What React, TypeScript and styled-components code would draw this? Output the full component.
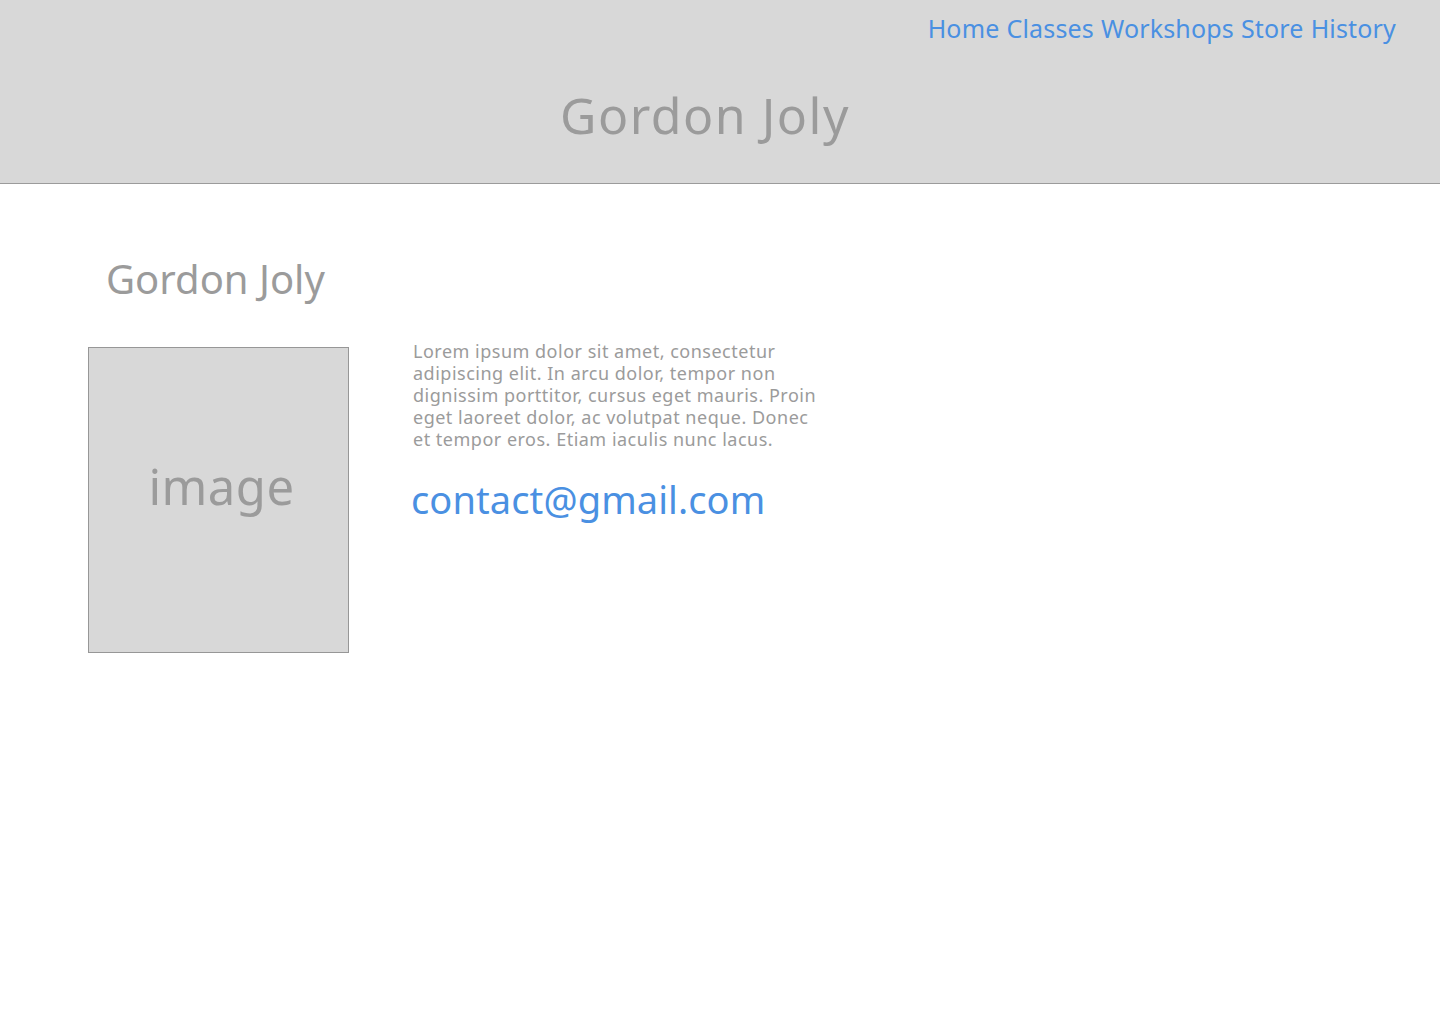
import React from 'react';
import styled, { createGlobalStyle } from 'styled-components';

const GlobalStyle = createGlobalStyle`
  body {
    margin: 0;
    background: #ffffff;
    font-family: 'Noto Sans', 'Open Sans', sans-serif;
  }
`;

const links = ['Home', 'Classes', 'Workshops', 'Store', 'History'];

const bioLines = [
  'Lorem ipsum dolor sit amet, consectetur',
  'adipiscing elit. In arcu dolor, tempor non',
  'dignissim porttitor, cursus eget mauris. Proin',
  'eget laoreet dolor, ac volutpat neque. Donec',
  'et tempor eros. Etiam iaculis nunc lacus.',
];

export default function App() {
  return (
    <>
      <GlobalStyle />
      <Header>
        <Nav>
          {links.map((l) => (
            <NavLink key={l} href="#">
              {l}
            </NavLink>
          ))}
        </Nav>
        <SiteTitle>Gordon Joly</SiteTitle>
      </Header>

      <Main>
        <Name>Gordon Joly</Name>
        <Row>
          <ImageBox>image</ImageBox>
          <Info>
            <Bio>
              {bioLines.map((line, i) => (
                <React.Fragment key={i}>
                  {line}
                  {i < bioLines.length - 1 && <br />}
                </React.Fragment>
              ))}
            </Bio>
            <Email href="#">contact@gmail.com</Email>
          </Info>
        </Row>
      </Main>
    </>
  );
}

const Header = styled.header`
  background-color: #d8d8d8;
  height: 183px;
  border-bottom: 1px solid #9b9b9b;
  display: flex;
  flex-direction: column;
  align-items: center;
`;

const Nav = styled.nav`
  align-self: flex-end;
  display: flex;
  gap: 7px;
  padding: 11px 44px 0 0;
`;

const NavLink = styled.a`
  color: #4a90e2;
  text-decoration: none;
  font-size: 25px;
  letter-spacing: 0.17px;
  line-height: 34px;
`;

const SiteTitle = styled.h1`
  margin: 39px 30px 0 0;
  font-size: 50px;
  font-weight: 400;
  letter-spacing: 1.5px;
  line-height: 62px;
  color: #9b9b9b;
`;

const Main = styled.main`
  padding: 70px 0 0 88px;
`;

const Name = styled.h2`
  margin: 0 0 43px 18px;
  font-size: 40px;
  font-weight: 400;
  line-height: 50px;
  color: #9b9b9b;
`;

const Row = styled.div`
  display: flex;
  align-items: flex-start;
  gap: 64px;
`;

const ImageBox = styled.div`
  width: 253px;
  height: 196px;
  padding: 108px 0 0 6px;
  box-sizing: content-box;
  background-color: #d8d8d8;
  border: 1px solid #979797;
  display: flex;
  justify-content: center;
  font-size: 49px;
  letter-spacing: 0.5px;
  color: #9b9b9b;
  line-height: 60px;
`;

const Info = styled.div`
  display: flex;
  flex-direction: column;
  margin-top: -7px;
`;

const Bio = styled.p`
  margin: 0;
  font-size: 18px;
  letter-spacing: 0.5px;
  line-height: 22px;
  color: #9b9b9b;
  white-space: nowrap;
`;

const Email = styled.a`
  margin-top: 25px;
  margin-left: -2px;
  font-size: 38px;
  letter-spacing: 0.1px;
  line-height: 48px;
  color: #4a90e2;
  text-decoration: none;
`;
